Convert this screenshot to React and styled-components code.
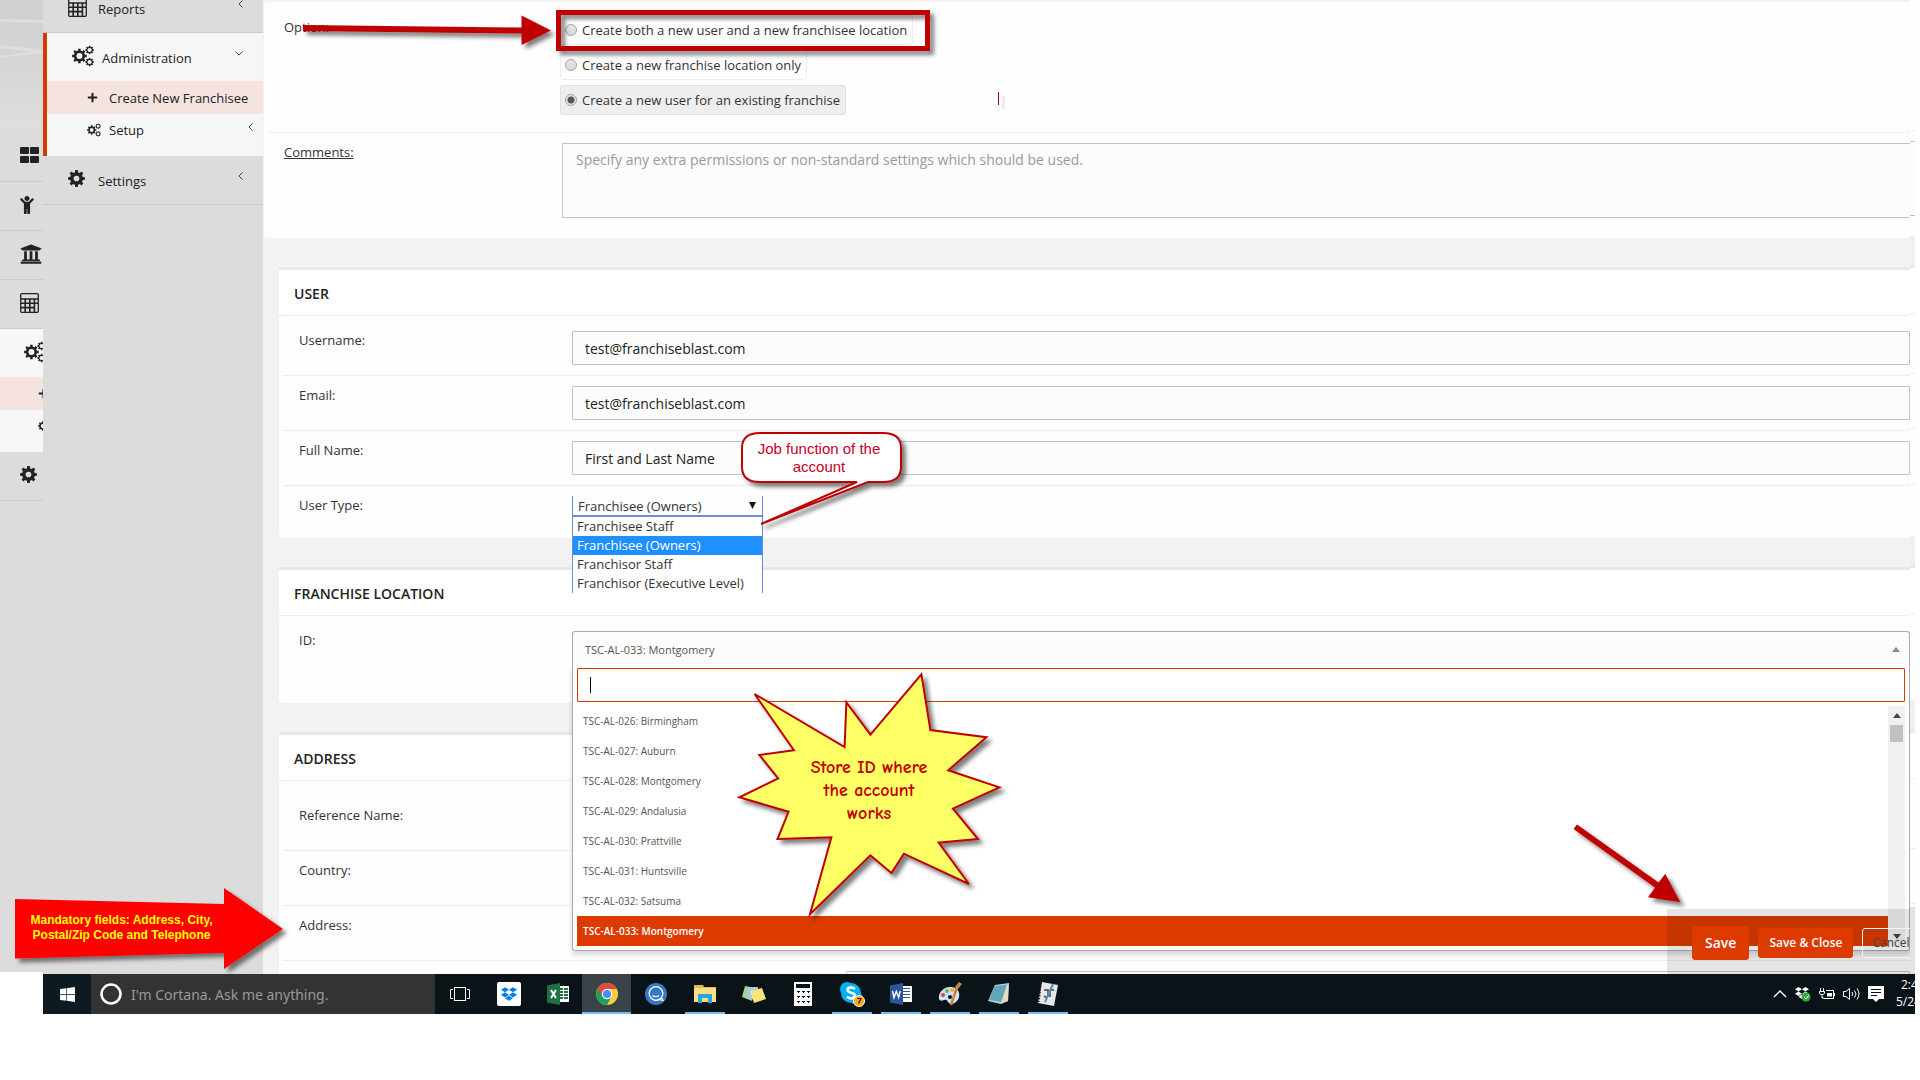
import React from 'react';
import styled, { createGlobalStyle, css } from 'styled-components';
import { FaDropbox, FaChild, FaUniversity, FaThLarge, FaPlus, FaWindows } from 'react-icons/fa';


const GlobalStyle = createGlobalStyle`
    * {
        box-sizing: border-box;
    }
    body {
        margin: 0;
        background: #fff;
        color: #333;
        font-family: "Open Sans", "Noto Sans", sans-serif;
        font-size: 13px;
        line-height: 20px;
    }
    button, input, select, textarea {
        font-family: inherit;
        margin: 0;
    }
`;

const Page = styled.div`
    position: relative;
    padding-right: 5px;
    overflow: hidden;
`;

const Viewport = styled.div`
    position: relative;
    display: grid;
    grid-template-columns: 43px 220px minmax(0, 1fr) 5px;
    height: calc(100vh - 106px);
    overflow: hidden;
`;

/* ---------- left rail ---------- */

const Rail = styled.nav`
    display: flex;
    flex-direction: column;
    margin-bottom: 2px;
    background: #dcdcdc;
    overflow: hidden;
`;

const RailArt = styled.svg`
    display: block;
    width: 43px;
    height: 133px;
    flex: none;
`;

const RailItem = styled.a`
    display: flex;
    align-items: center;
    flex: none;
    height: ${(p) => p.$height || 49}px;
    padding-left: ${(p) => p.$indent || 20}px;
    padding-bottom: ${(p) => p.$lift || 3}px;
    color: #222;
    background: ${(p) => p.$bg || 'transparent'};
    border-bottom: ${(p) => (p.$bg ? 'none' : '1px solid #cbcbcb')};

    svg {
        flex: none;
    }
`;

/* ---------- menu ---------- */

const Menu = styled.nav`
    background: #dcdcdc;
    overflow: hidden;
`;

const MenuList = styled.div`
    margin-top: -16px;
`;

const MenuGroup = styled.div`
    background: #f6f6f6;
    border-left: 4px solid #d33a00;
    padding-bottom: 10px;
`;

const menuLink = css`
    display: flex;
    align-items: center;
    color: #222;
    text-decoration: none;
`;

const MenuItem = styled.a`
    ${menuLink}
    height: ${(p) => (p.$open ? 48 : 49)}px;
    padding: 0 20px 0 25px;
    border-bottom: ${(p) => (p.$open ? 'none' : '1px solid #cbcbcb')};

    > svg:first-child {
        margin-bottom: 3px;
    }
    > svg:last-child {
        margin-bottom: 8px;
    }
`;

const MenuText = styled.span`
    flex: 1;
    margin: 2px 0 0 ${(p) => p.$gap}px;
    white-space: nowrap;
`;

const SubItem = styled.a`
    ${menuLink}
    height: ${(p) => (p.$active ? 33 : 32)}px;
    padding: 0 10px 0 40px;
    background: ${(p) => (p.$active ? '#f5e3df' : 'transparent')};

    ${MenuText} {
        margin-top: 0;
    }
    > svg:nth-child(3) {
        margin-bottom: 6px;
    }
`;

/* ---------- form ---------- */

const Main = styled.main`
    display: flex;
    flex-direction: column;
    background: #f2f2f2;
    overflow: hidden;
`;

const TopCard = styled.section`
    flex: none;
    margin: 2px 0 0 1px;
    padding-left: 5px;
    background: #fefefe;
    border-radius: 4px 0 0 4px;
`;

const Panel = styled.section`
    flex: none;
    margin: 29px 0 0 16px;
    border-top: 3px solid #e6e9ec;
`;

const PanelTitle = styled.h2`
    margin: 0;
    height: 46px;
    padding: 14px 0 0 15px;
    background: #fff;
    border-bottom: 1px solid #eee;
    color: #222;
    font-size: 14px;
    font-weight: 600;
    line-height: 20px;
`;

const PanelBody = styled.div`
    padding: ${(p) => p.$top || 5}px 0 0 5px;
    background: #fefefe;
    border-radius: 4px 0 0 4px;
`;

const Row = styled.div`
    display: grid;
    grid-template-columns: ${(p) => p.$label || 273}px minmax(0, 1fr);
    align-items: start;
    padding: 10px 0 ${(p) => (p.$bottom === undefined ? 10 : p.$bottom)}px 15px;
    border-bottom: ${(p) => (p.$last ? 'none' : '1px dotted #ddd')};
`;

const Label = styled.label`
    color: #333;
    line-height: 18px;
    text-decoration: ${(p) => (p.$underline ? 'underline' : 'none')};
`;

const OptionRow = styled(Row)`
    padding-top: 13px;
    padding-bottom: 17px;

    > ${Label} {
        padding-top: 3px;
    }
`;

const TextInput = styled.input`
    width: 100%;
    height: 34px;
    padding: 0 12px;
    border: 1px solid #c2c2c2;
    border-radius: 1px;
    background: #fcfcfc;
    color: #222;
    font-size: 14px;
    outline: none;
`;

const HalfInput = styled(TextInput)`
    margin-left: 274px;
    width: calc(100% - 274px);
`;

const TextArea = styled.textarea`
    display: block;
    width: calc(100% - 2px);
    height: 75px;
    margin-left: 2px;
    padding: 6px 13px;
    border: 1px solid #c2c2c2;
    border-right: none;
    background: #fcfcfc;
    font-size: 14px;
    line-height: 20px;
    resize: none;
    outline: none;

    &::placeholder {
        color: #999;
    }
`;

const Options = styled.div`
    display: flex;
    flex-direction: column;
    align-items: flex-start;
    gap: 5px;
`;

const Option = styled.label`
    display: flex;
    align-items: center;
    height: 30px;
    padding: 0 5px 0 4px;
    border: 1px solid ${(p) => (p.$checked ? '#e0e0e0' : '#eee')};
    border-radius: 3px;
    background: ${(p) => (p.$checked ? '#eee' : 'transparent')};
`;

const Radio = styled.input`
    appearance: none;
    width: 12px;
    height: 12px;
    margin-right: 5px;
    border: 1px solid #a5a5a5;
    border-radius: 50%;
    background: linear-gradient(#e6e6e6, #d8d8d8);

    &:checked {
        background: radial-gradient(circle, #555 0 3px, #e6e6e6 4px);
    }
`;

const SelectWrap = styled.div`
    position: relative;
    width: 191px;
    height: 42px;
`;

const Select = styled.select`
    appearance: none;
    display: block;
    width: 191px;
    height: 20px;
    padding: 0 5px;
    border: 1px solid #6a8fd8;
    border-top: none;
    border-radius: 0;
    background: #fefefe;
    color: #333;
    font-size: 13px;
    outline: none;
`;

const SelectArrow = styled.svg`
    position: absolute;
    top: 6px;
    right: 7px;
    pointer-events: none;
`;

const SelectList = styled.ul`
    position: absolute;
    top: 20px;
    left: 0;
    z-index: 2;
    width: 191px;
    margin: 0;
    padding: 0;
    list-style: none;
    background: #fff;
    border: 1px solid #6a8fd8;
    border-bottom: none;
`;

const SelectOption = styled.li`
    height: 19px;
    padding-left: 4px;
    line-height: 18px;
    color: ${(p) => (p.$active ? '#fff' : '#333')};
    background: ${(p) => (p.$active ? '#1e90ff' : 'transparent')};
`;

/* ---------- searchable store drop-down ---------- */

const Combo = styled.div`
    position: relative;
    height: 72px;
`;

const ComboButton = styled.button`
    display: flex;
    align-items: center;
    justify-content: space-between;
    width: 100%;
    height: 33px;
    padding: 2px 9px 0 12px;
    border: 1px solid #aaa;
    border-bottom: none;
    border-radius: 3px 3px 0 0;
    background: #fcfcfc;
    color: #555;
    font-size: 11px;
`;

const ComboPopup = styled.div`
    position: absolute;
    top: 33px;
    left: 0;
    right: 0;
    z-index: 2;
    padding: 4px;
    background: #fff;
    border: 1px solid #aaa;
    border-top: none;
    border-radius: 0 0 3px 3px;
    box-shadow: 0 4px 5px rgba(0, 0, 0, 0.15);
`;

const SearchBox = styled.div`
    position: relative;
    margin-bottom: 4px;
`;

const SearchInput = styled(TextInput)`
    display: block;
    border-color: #dd3a00;
    background: #fff;
`;

const Caret = styled.span`
    position: absolute;
    top: 9px;
    left: 13px;
    width: 1px;
    height: 16px;
    background: #000;
`;

const StoreScroll = styled.div`
    display: flex;
`;

const StoreList = styled.ul`
    flex: 1;
    margin: 0;
    padding: 0;
    list-style: none;
`;

const Store = styled.li`
    height: 30px;
    padding-left: 6px;
    font-size: 10px;
    line-height: 30px;
    font-weight: ${(p) => (p.$active ? 600 : 400)};
    color: ${(p) => (p.$active ? '#fff' : '#555')};
    background: ${(p) => (p.$active ? '#dd3a00' : 'transparent')};
`;

const ScrollBar = styled.div`
    display: flex;
    flex-direction: column;
    align-items: center;
    width: 17px;
    padding: 7px 0;
    background: #f1f1f1;
`;

const ScrollThumb = styled.div`
    width: 13px;
    height: 17px;
    margin: 7px 0 auto;
    background: #c1c1c1;
`;

/* ---------- edge of the page behind ---------- */

const Edge = styled.div`
    overflow: hidden;
`;

const EdgePart = styled.div`
    height: ${(p) => p.$height}px;
    background: ${(p) => p.$bg};
    border-bottom: ${(p) => p.$line || 'none'};
`;

/* ---------- action bar ---------- */

const ActionBar = styled.div`
    position: absolute;
    right: 5px;
    bottom: 0;
    z-index: 3;
    display: flex;
    align-items: center;
    gap: 9px;
    width: 243px;
    height: 65px;
    padding: 2px 0 0 25px;
    background: rgba(0, 0, 0, 0.1);
    overflow: hidden;
`;

const ActionButton = styled.button`
    flex: none;
    height: ${(p) => (p.$large ? 34 : 30)}px;
    padding: 0 ${(p) => p.$pad || 10}px;
    border: 1px solid ${(p) => (p.$plain ? '#f4f4f4' : '#dd3a00')};
    border-radius: 3px;
    background: ${(p) => (p.$plain ? 'transparent' : '#dd3a00')};
    color: ${(p) => (p.$plain ? '#444' : '#fff')};
    font-size: ${(p) => (p.$large ? 14 : 12)}px;
    font-weight: ${(p) => (p.$plain ? 400 : 600)};
`;

/* ---------- taskbar ---------- */

const Taskbar = styled.footer`
    display: flex;
    height: 40px;
    margin-left: 43px;
    background: #0a1418;
    overflow: hidden;
`;

const StartButton = styled.button`
    width: 48px;
    padding: 0;
    border: none;
    background: #0c1b22;
    color: #fff;

    svg {
        display: block;
        margin: 0 auto;
    }
`;

const Cortana = styled.label`
    display: flex;
    align-items: center;
    gap: 9px;
    width: 344px;
    padding-left: 9px;
    background: #333;
`;

const CortanaInput = styled.input`
    flex: 1;
    min-width: 0;
    padding: 0;
    border: none;
    outline: none;
    background: transparent;
    font-family: "Noto Sans", "Open Sans", sans-serif;
    font-size: 14px;

    &::placeholder {
        color: #9a9a9a;
    }
`;

const Task = styled.button`
    position: relative;
    display: flex;
    align-items: center;
    justify-content: center;
    width: 49px;
    padding: 0;
    border: none;
    background: ${(p) => (p.$active ? '#3a4347' : 'transparent')};

    &::after {
        content: "";
        position: absolute;
        bottom: 0;
        left: ${(p) => (p.$active ? 0 : 5)}px;
        right: ${(p) => (p.$active ? 0 : 4)}px;
        height: 2px;
        background: ${(p) => (p.$running ? '#76b9f5' : 'transparent')};
    }
`;

const Tray = styled.div`
    display: flex;
    align-items: center;
    gap: 8px;
    margin-left: auto;
    color: #fff;
`;

const Clock = styled.time`
    width: 19px;
    height: 36px;
    margin-left: 4px;
    font-size: 12px;
    line-height: 17px;
    text-align: left;
    white-space: nowrap;
    overflow: hidden;

    span {
        display: block;
    }
    span:first-child {
        padding-left: 5px;
    }
`;

/* ---------- annotations ---------- */

const Marks = styled.svg`
    position: absolute;
    top: 0;
    left: 0;
    z-index: 4;
    width: 1010px;
    height: 974px;
    pointer-events: none;
`;

const SaveArrow = styled.svg`
    position: absolute;
    top: 815px;
    right: 225px;
    z-index: 4;
    width: 125px;
    height: 100px;
    pointer-events: none;
`;

const Note = styled.p`
    position: absolute;
    top: ${(p) => p.$top}px;
    left: ${(p) => p.$left}px;
    z-index: 5;
    width: ${(p) => p.$width}px;
    margin: 0;
    text-align: center;
`;

const BubbleNote = styled(Note)`
    color: #c8001e;
    font-family: "Liberation Sans", Arial, sans-serif;
    font-size: 15px;
    line-height: 18px;
`;

const BurstNote = styled(Note)`
    color: #c00000;
    font-family: "Comic Sans MS", "Comic Neue", Lato, sans-serif;
    font-size: 18px;
    font-weight: 900;
    line-height: 23px;
`;

const ArrowNote = styled(Note)`
    color: #ffff00;
    font-family: "Liberation Sans", Arial, sans-serif;
    font-size: 12px;
    font-weight: 700;
    line-height: 15px;
`;

/* ---------- icons ---------- */

// outline of a toothed wheel with a round hole
const gear = (cx, cy, r, hole, teeth = 8) => {
    const pts = [];
    const step = (Math.PI * 2) / teeth;
    const inner = r * 0.76;
    for (let i = 0; i < teeth; i++) {
        const a = i * step - Math.PI / 2;
        [[-0.3, inner], [-0.2, r], [0.2, r], [0.3, inner]].forEach(([k, d]) => {
            pts.push(`${(cx + Math.cos(a + k * step) * d).toFixed(2)} ${(cy + Math.sin(a + k * step) * d).toFixed(2)}`);
        });
    }
    return `M${pts.join('L')}ZM${cx - hole} ${cy}a${hole} ${hole} 0 1 0 ${hole * 2} 0a${hole} ${hole} 0 1 0 ${-hole * 2} 0Z`;
};

const CogIcon = ({ size = 17 }) => (
    <svg width={size} height={size} viewBox="0 0 18 18" fill="#222" fillRule="evenodd">
        <path d={gear(9, 9, 9, 3)} />
    </svg>
);

const CogsIcon = ({ size = 22 }) => (
    <svg width={size} height={size} viewBox="0 0 22 22" fill="#222" fillRule="evenodd">
        <path d={gear(7.4, 11, 7.4, 3)} />
        <path d={gear(17.6, 5, 4.4, 2.1)} />
        <path d={gear(17.6, 17, 4.4, 2.1)} />
    </svg>
);

const WindowsGridIcon = () => (
    <svg width="19" height="16" fill="#222">
        <rect width="9" height="7" rx="1" />
        <rect x="10" width="9" height="7" rx="1" />
        <rect y="9" width="9" height="7" rx="1" />
        <rect x="10" y="9" width="9" height="7" rx="1" />
    </svg>
);

const CalculatorIcon = () => (
    <svg width="19" height="20" viewBox="0 0 19 20" fill="none" stroke="#222" strokeWidth="1.3">
        <rect x="0.7" y="0.7" width="17.6" height="18.6" rx="1" />
        <path d="M1 6h17M1 10.3h17M1 14.6h13.4M5.2 6v13.5M9.8 6v13.5M14.4 6v13.5" strokeWidth="1.6" />
    </svg>
);

const Chevron = ({ down }) => (
    <svg width={down ? 8 : 5} height={down ? 5 : 8} fill="none" stroke="#444" strokeWidth="1">
        <path d={down ? 'M0.5 0.5L4 4L7.5 0.5' : 'M4.5 0.5L1 4L4.5 7.5'} />
    </svg>
);

const Triangle = ({ down, color }) => (
    <svg width="8" height="5" fill={color}>
        <path d={down ? 'M0 0H8L4 5Z' : 'M0 5H8L4 0Z'} />
    </svg>
);

const TaskViewIcon = () => (
    <svg width="20" height="16" fill="none" stroke="#fff">
        <rect x="4.5" y="1.5" width="11" height="13" />
        <path d="M3 3.5H0.5V12.5H3M17 3.5H19.5V12.5H17" />
    </svg>
);

const DropboxIcon = () => (
    <svg width="24" height="24">
        <rect width="24" height="24" rx="2" fill="#fff" />
        <FaDropbox x="4" y="4" size={16} color="#007ee5" />
    </svg>
);

const ExcelIcon = () => (
    <svg width="22" height="22">
        <rect x="11" y="3" width="11" height="16" fill="#fff" />
        <path d="M12 5h4v2h-4zM17 5h4v2h-4zM12 8h4v2h-4zM17 8h4v2h-4zM12 11h4v2h-4zM17 11h4v2h-4zM12 14h4v2h-4zM17 14h4v2h-4z" fill="#207245" />
        <path d="M0 2.5L13 0V22L0 19.5Z" fill="#207245" />
        <path d="M4 7l5 8M9 7l-5 8" stroke="#fff" strokeWidth="2" />
    </svg>
);

const ChromeIcon = () => (
    <svg width="22" height="22" viewBox="0 0 22 22">
        <circle cx="11" cy="11" r="11" fill="#ffcd40" />
        <path d="M11 11L1.5 5.5A11 11 0 0 0 11 22L15.5 13.5Z" fill="#1aa15f" />
        <path d="M1.5 5.5A11 11 0 0 1 20.7 6H11L6.5 13.5Z" fill="#dd4b3e" />
        <circle cx="11" cy="11" r="5.2" fill="#fff" />
        <circle cx="11" cy="11" r="4.1" fill="#4a8af4" />
    </svg>
);

const ChatIcon = () => (
    <svg width="22" height="22">
        <circle cx="11" cy="11" r="11" fill="#3579c4" />
        <circle cx="11" cy="10.5" r="6.8" fill="none" stroke="#fff" strokeWidth="1.3" />
        <path d="M7.5 12.5Q11 15 14 12.5M13.5 16.5L18 17.5L16.5 14.5" fill="none" stroke="#fff" strokeWidth="1.2" />
    </svg>
);

const FolderIcon = () => (
    <svg width="22" height="20">
        <path d="M0 1h9l1 2h12v15H0Z" fill="#e8b94a" />
        <path d="M0 4h22v14H0Z" fill="#fddf82" />
        <path d="M4 10h14v9h-4v-5H8v5H4Z" fill="#27a7e0" />
    </svg>
);

const NotesIcon = () => (
    <svg width="24" height="20">
        <path d="M3 2L13 4L10 17L0 13Z" fill="#9fd58c" />
        <path d="M6 3L16 3L15 15L5 15Z" fill="#a9cbe8" />
        <path d="M8 7L20 4L24 15L12 19Z" fill="#f8e479" />
    </svg>
);

const CalcIcon = () => (
    <svg width="18" height="24">
        <rect width="18" height="24" fill="#fff" />
        <path d="M2 2h14v4H2z" fill="#0a1418" />
        {[9, 14, 19].map((y) => [3, 8, 13].map((x) => (
            <path key={`${x}-${y}`} d={`M${x} ${y}h3v1h-1v1h-1v-1h-1z`} fill="#0a1418" />
        )))}
    </svg>
);

const SkypeIcon = () => (
    <svg width="26" height="26">
        <circle cx="8" cy="8" r="7" fill="#00aff0" />
        <circle cx="16" cy="16" r="7" fill="#00aff0" />
        <circle cx="12" cy="12" r="10" fill="#00aff0" />
        <path d="M16 8Q11.5 5 8.8 7.5Q7.5 10.5 12 11.8Q17 13 15.5 16Q12.5 19 7.8 15.8" fill="none" stroke="#fff" strokeWidth="2.6" />
        <circle cx="20" cy="20" r="5.5" fill="#ffa80f" stroke="#fff" />
        <path d="M18 17.5H22L19.5 22.5" fill="none" stroke="#222" strokeWidth="1.2" />
    </svg>
);

const WordIcon = () => (
    <svg width="22" height="22">
        <rect x="11" y="3" width="11" height="16" fill="#fff" />
        <path d="M13 5.5h7M13 8.5h7M13 11.5h7M13 14.5h7" stroke="#2b579a" />
        <path d="M0 2.5L13 0V22L0 19.5Z" fill="#2b579a" />
        <path d="M2.5 8l1.5 6.5l2.3-6l2.3 6L10.2 8" fill="none" stroke="#fff" strokeWidth="1.4" />
    </svg>
);

const PaintIcon = () => (
    <svg width="24" height="24">
        <path d="M11 5C4 6 0 12 1 17Q2 20 6 18Q9 17 10 20Q13 24 18 20C24 15 22 4 11 5Z" fill="#cfe4f4" />
        <circle cx="5" cy="13" r="2" fill="#e0473d" />
        <circle cx="9" cy="9" r="2" fill="#64b849" />
        <circle cx="14" cy="8" r="2" fill="#f2a93b" />
        <circle cx="12" cy="15" r="2" fill="#0a1418" />
        <path d="M19 5L13 23" stroke="#c8823c" strokeWidth="2.5" />
        <path d="M17 5L21 0L24 2L20 7Z" fill="#b98a5e" />
    </svg>
);

const NotepadIcon = () => (
    <svg width="24" height="22">
        <path d="M8 2L22 0L21 18L14 21L1 18Z" fill="#b9d9e2" />
        <path d="M8 3L20 1.5L14 19L2 17Z" fill="#5fa6b8" />
        <path d="M20 2L21.5 2L21 18L15 20Z" fill="#e4dcc4" />
    </svg>
);

const JournalIcon = () => (
    <svg width="20" height="24">
        <path d="M4 0L20 3L16 24L0 21Z" fill="#e6e8ea" />
        <path d="M3 1L1 20" stroke="#222" strokeWidth="1.5" strokeDasharray="1.5 1.5" />
        <path d="M6 8h4v6q-2 2-4 0M12 8h4M12 8v7" fill="none" stroke="#444" strokeWidth="1.5" />
        <path d="M15 2L7 20" stroke="#4d90b5" strokeWidth="2" />
    </svg>
);

const TrayUpIcon = () => (
    <svg width="14" height="10" fill="none" stroke="#fff" strokeWidth="1.4">
        <path d="M1 8L7 2L13 8" />
    </svg>
);

const TrayDropboxIcon = () => (
    <svg width="16" height="16">
        <FaDropbox size={14} color="#fff" />
        <circle cx="11" cy="11" r="4.5" fill="#2fae3e" />
        <path d="M9 11l2 2l3-4" fill="none" stroke="#fff" />
    </svg>
);

const BatteryIcon = () => (
    <svg width="16" height="14" fill="none" stroke="#fff">
        <path d="M1.5 1v3M4.5 1v3M0.5 4.5h5v2l-1.5 1h-2l-1.500-1zM3 8v3h2" />
        <path d="M7 3.5h7.5v8H5M15.5 6v3" />
        <path d="M8 6h5v3.5H8z" fill="#fff" stroke="none" />
    </svg>
);

const VolumeIcon = () => (
    <svg width="17" height="14" fill="none" stroke="#fff">
        <path d="M0.5 4.5h2.5l3.5-3v11l-3.5-3h-2.5zM9 5q1.5 2 0 4M11.5 3.5q3 3.5 0 7M14 1.5q4 5.5 0 11" />
    </svg>
);

const ActionCenterIcon = () => (
    <svg width="16" height="16">
        <path d="M0 0H16V13H11L8 16L5 13H0Z" fill="#fff" />
        <path d="M3 3.5h10M3 6.5h10M3 9.5h6" stroke="#0a1418" />
    </svg>
);

/* ---------- data ---------- */

const options = [
    'Create both a new user and a new franchisee location',
    'Create a new franchise location only',
    'Create a new user for an existing franchise',
];

const userFields = [
    { id: 'username', label: 'Username:', value: 'test@franchiseblast.com' },
    { id: 'email', label: 'Email:', value: 'test@franchiseblast.com' },
    { id: 'fullname', label: 'Full Name:', value: 'First and Last Name' },
];

const userTypes = ['Franchisee Staff', 'Franchisee (Owners)', 'Franchisor Staff', 'Franchisor (Executive Level)'];

const stores = [
    'TSC-AL-026: Birmingham',
    'TSC-AL-027: Auburn',
    'TSC-AL-028: Montgomery',
    'TSC-AL-029: Andalusia',
    'TSC-AL-030: Prattville',
    'TSC-AL-031: Huntsville',
    'TSC-AL-032: Satsuma',
    'TSC-AL-033: Montgomery',
];

const tasks = [
    { name: 'Task View', icon: <TaskViewIcon /> },
    { name: 'Dropbox', icon: <DropboxIcon /> },
    { name: 'Excel', icon: <ExcelIcon /> },
    { name: 'Chrome', icon: <ChromeIcon />, active: true, running: true },
    { name: 'Chat', icon: <ChatIcon /> },
    { name: 'File Explorer', icon: <FolderIcon />, running: true },
    { name: 'Sticky Notes', icon: <NotesIcon /> },
    { name: 'Calculator', icon: <CalcIcon /> },
    { name: 'Skype', icon: <SkypeIcon />, running: true },
    { name: 'Word', icon: <WordIcon />, running: true },
    { name: 'Paint', icon: <PaintIcon />, running: true },
    { name: 'Notepad', icon: <NotepadIcon />, running: true },
    { name: 'Journal', icon: <JournalIcon />, running: true },
];

const dots = '1px dotted #ddd';
const edgeParts = [
    [131, '#fefefe', dots],
    [11, '#fefefe', '1px solid #c2c2c2'],
    [74, '#fcfcfc', '1px solid #c2c2c2'],
    [20, '#fefefe'],
    [32, '#f0f0f0', '3px solid #e6e9ec'],
    [46, '#fff', '1px solid #eee'],
    [60, '#fefefe', dots],
    [55, '#fefefe', dots],
    [55, '#fefefe', dots],
    [52, '#fefefe'],
    [32, '#f0f0f0', '3px solid #e6e9ec'],
    [46, '#fff', '1px solid #eee'],
    [87, '#fefefe'],
    [32, '#f0f0f0', '3px solid #e6e9ec'],
    [46, '#fff', '1px solid #eee'],
    [70, '#fefefe', dots],
    [55, '#fefefe', dots],
    [3, '#fefefe'],
    [68, '#e2e2e2'],
];

const burst = '754.6,694 844.6,747 846.4,702.3 870.4,734.7 921.4,674.3 930.4,730 986.4,737.3 948.2,770.3 999.3,787.3 952.9,808.7 977.9,839 938.6,842.7 968.9,884 903.9,853.7 891.4,873 870.4,855.3 810,914.3 831.4,837.3 777.5,839 788.6,811.7 739.3,797.3 778.2,778.3 759.3,755 793.9,750.3';


const SideRail = () => (
    <Rail aria-label="Collapsed menu">
        <RailArt viewBox="0 0 43 133" preserveAspectRatio="none">
            <defs>
                <linearGradient id="railFade" x1="0" y1="0" x2="0" y2="1">
                    <stop offset="0" stopColor="#d0d0d0" />
                    <stop offset="0.5" stopColor="#d6d6d6" />
                    <stop offset="1" stopColor="#dedede" />
                </linearGradient>
            </defs>
            <rect width="43" height="133" fill="url(#railFade)" />
            <path d="M0 19L43 20V23L0 22ZM0 45L43 50V53L0 48ZM0 56L43 50V53L0 58Z" fill="#dedede" />
        </RailArt>
        <RailItem href="#dashboard" aria-label="Dashboard" $lift={5}><WindowsGridIcon /></RailItem>
        <RailItem href="#people" aria-label="People" $indent={18}><FaChild size={18} /></RailItem>
        <RailItem href="#company" aria-label="Company"><FaUniversity size={22} /></RailItem>
        <RailItem href="#reports" aria-label="Reports"><CalculatorIcon /></RailItem>
        <RailItem href="#administration" aria-label="Administration" $height={48} $indent={24} $bg="#f7f7f7"><CogsIcon /></RailItem>
        <RailItem href="#create" aria-label="Create New Franchisee" $height={33} $indent={38} $lift={1} $bg="#f5e3df"><FaPlus size={11} /></RailItem>
        <RailItem href="#setup" aria-label="Setup" $height={42} $indent={38} $lift={10} $bg="#f7f7f7"><CogsIcon size={14} /></RailItem>
        <RailItem href="#settings" aria-label="Settings"><CogIcon /></RailItem>
    </Rail>
);

const SideMenu = () => (
    <Menu>
        <MenuList>
            <MenuItem href="#reports">
                <CalculatorIcon />
                <MenuText $gap={11}>Reports</MenuText>
                <Chevron />
            </MenuItem>
            <MenuGroup>
                <MenuItem href="#administration" $open>
                    <CogsIcon />
                    <MenuText $gap={8}>Administration</MenuText>
                    <Chevron down />
                </MenuItem>
                <SubItem href="#create" $active>
                    <FaPlus size={11} />
                    <MenuText $gap={11}>Create New Franchisee</MenuText>
                </SubItem>
                <SubItem href="#setup">
                    <CogsIcon size={14} />
                    <MenuText $gap={8}>Setup</MenuText>
                    <Chevron />
                </SubItem>
            </MenuGroup>
            <MenuItem href="#settings">
                <CogIcon />
                <MenuText $gap={13}>Settings</MenuText>
                <Chevron />
            </MenuItem>
        </MenuList>
    </Menu>
);

const StoreCombo = () => (
    <Combo>
        <ComboButton id="store" type="button">
            {stores[7]}
            <Triangle color="#888" />
        </ComboButton>
        <ComboPopup>
            <SearchBox>
                <SearchInput type="text" aria-label="Search stores" />
                <Caret />
            </SearchBox>
            <StoreScroll>
                <StoreList>
                    {stores.map((s, i) => <Store key={s} $active={i === 7}>{s}</Store>)}
                </StoreList>
                <ScrollBar>
                    <Triangle color="#444" />
                    <ScrollThumb />
                    <Triangle down color="#444" />
                </ScrollBar>
            </StoreScroll>
        </ComboPopup>
    </Combo>
);

const FranchiseForm = () => (
    <Main>
        <TopCard>
            <OptionRow $label={276}>
                <Label as="span">Option:</Label>
                <Options>
                    {options.map((o, i) => (
                        <Option key={o} $checked={i === 2}>
                            <Radio type="radio" name="option" defaultChecked={i === 2} />
                            {o}
                        </Option>
                    ))}
                </Options>
            </OptionRow>
            <Row $label={276} $bottom={20} $last>
                <Label htmlFor="comments" $underline>Comments:</Label>
                <TextArea id="comments" placeholder="Specify any extra permissions or non-standard settings which should be used." />
            </Row>
        </TopCard>

        <Panel>
            <PanelTitle>USER</PanelTitle>
            <PanelBody>
                {userFields.map((f) => (
                    <Row key={f.id}>
                        <Label htmlFor={f.id}>{f.label}</Label>
                        <TextInput id={f.id} type="text" defaultValue={f.value} />
                    </Row>
                ))}
                <Row $bottom={0} $last>
                    <Label htmlFor="usertype">User Type:</Label>
                    <SelectWrap>
                        <Select id="usertype" defaultValue={userTypes[1]}>
                            {userTypes.map((t) => <option key={t}>{t}</option>)}
                        </Select>
                        <SelectArrow width="7" height="7"><path d="M0 0H7L3.5 7Z" fill="#111" /></SelectArrow>
                        <SelectList>
                            {userTypes.map((t, i) => <SelectOption key={t} $active={i === 1}>{t}</SelectOption>)}
                        </SelectList>
                    </SelectWrap>
                </Row>
            </PanelBody>
        </Panel>

        <Panel>
            <PanelTitle>FRANCHISE LOCATION</PanelTitle>
            <PanelBody>
                <Row $bottom={0} $last>
                    <Label htmlFor="store">ID:</Label>
                    <StoreCombo />
                </Row>
            </PanelBody>
        </Panel>

        <Panel>
            <PanelTitle>ADDRESS</PanelTitle>
            <PanelBody $top={15}>
                <Row>
                    <Label htmlFor="refname">Reference Name:</Label>
                    <TextInput id="refname" type="text" />
                </Row>
                <Row>
                    <Label htmlFor="country">Country:</Label>
                    <TextInput id="country" type="text" />
                </Row>
                <Row>
                    <Label htmlFor="address">Address:</Label>
                    <TextInput id="address" type="text" />
                </Row>
                <Row>
                    <Label htmlFor="address2">Address 2:</Label>
                    <HalfInput id="address2" type="text" />
                </Row>
            </PanelBody>
        </Panel>
    </Main>
);

const WindowsTaskbar = () => (
    <Taskbar>
        <StartButton type="button" aria-label="Start"><FaWindows size={17} /></StartButton>
        <Cortana>
            <svg width="22" height="22" fill="none" stroke="#fff" strokeWidth="2.5"><circle cx="11" cy="11" r="9.5" /></svg>
            <CortanaInput type="text" aria-label="Cortana" placeholder="I'm Cortana. Ask me anything." />
        </Cortana>
        {tasks.map((t) => (
            <Task key={t.name} type="button" aria-label={t.name} $active={t.active} $running={t.running}>{t.icon}</Task>
        ))}
        <Tray>
            <TrayUpIcon />
            <TrayDropboxIcon />
            <BatteryIcon />
            <VolumeIcon />
            <ActionCenterIcon />
            <Clock>
                <span>2:4</span>
                <span>5/24</span>
            </Clock>
        </Tray>
    </Taskbar>
);

const Annotations = () => (
    <>
        <Marks>
            <defs>
                <filter id="drop" x="-10%" y="-40%" width="125%" height="200%">
                    <feDropShadow dx="4" dy="4" stdDeviation="2" floodColor="#000" floodOpacity="0.5" />
                </filter>
            </defs>
            <path d="M303 25L521.5 27.5V15.5L551 30.5L521.5 45V33.5L303 31Z" fill="#c00000" filter="url(#drop)" />
            <rect x="558.5" y="12.5" width="369" height="36" fill="none" stroke="#c00000" strokeWidth="5" filter="url(#drop)" />
            <path d="M1002 96h3v13h-3z" fill="#ececec" />
            <path d="M998 92h1v13h-1z" fill="#a00000" />
            <path d="M760 433H883Q901 433 901 448V467Q901 482 883 482H868L761 524L857 482H760Q742 482 742 467V448Q742 433 760 433Z" fill="#fff" stroke="#c00000" strokeWidth="2" filter="url(#drop)" />
            <polygon points={burst} fill="#ffff66" stroke="#c00000" strokeWidth="2" filter="url(#drop)" />
            <path d="M15 899L224 904V888L283 929L224 969V953L15 958.5Z" fill="#ff0000" filter="url(#drop)" />
        </Marks>
        <BubbleNote $top={440} $left={747} $width={144}>Job function of the account</BubbleNote>
        <BurstNote $top={756} $left={804} $width={130}>Store ID where the account works</BurstNote>
        <ArrowNote $top={913} $left={25} $width={193}>Mandatory fields: Address, City, Postal/Zip Code and Telephone</ArrowNote>
        <SaveArrow viewBox="1570 815 125 100">
            <path d="M1577 824.5L1658.5 882.5L1665.3 873.7L1680.3 902.3L1648 897.3L1655 887.5L1573.5 829Z" fill="#c00000" filter="url(#drop)" />
        </SaveArrow>
    </>
);

const App = () => {
    return (
        <Page>
            <GlobalStyle />
            <Viewport>
                <SideRail />
                <SideMenu />
                <FranchiseForm />
                <Edge>
                    {edgeParts.map(([height, bg, line], i) => (
                        <EdgePart key={i} $height={height} $bg={bg} $line={line} />
                    ))}
                </Edge>
                <ActionBar>
                    <ActionButton type="button" $large $pad={12}>Save</ActionButton>
                    <ActionButton type="button">Save &amp; Close</ActionButton>
                    <ActionButton type="button" $plain $pad={9}>Cancel</ActionButton>
                </ActionBar>
            </Viewport>
            <WindowsTaskbar />
            <Annotations />
        </Page>
    )
}

export default App
